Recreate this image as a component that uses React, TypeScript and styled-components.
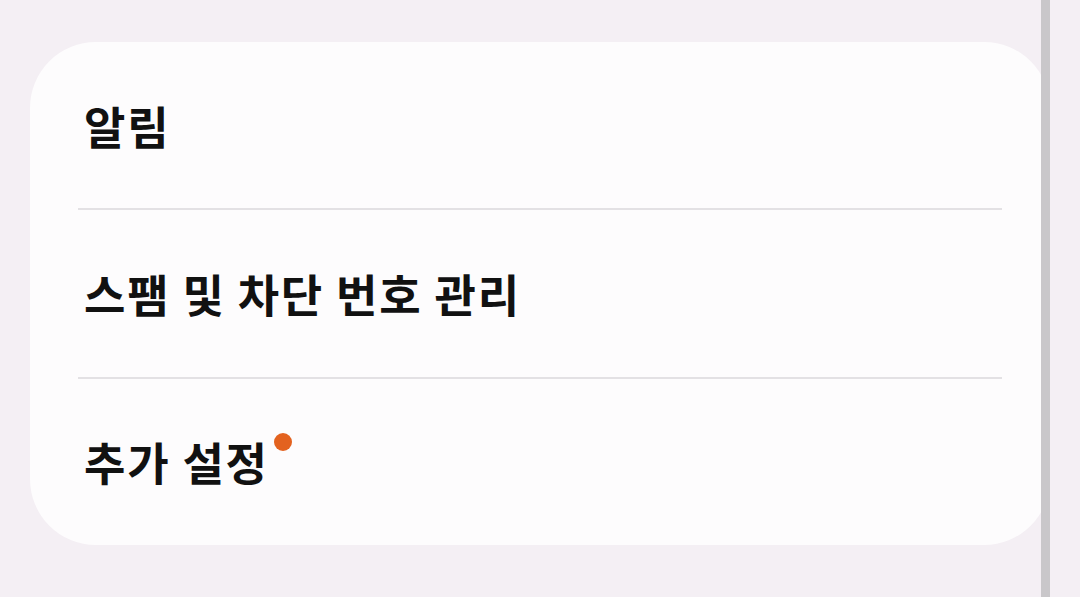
import React from "react";
import styled, { createGlobalStyle } from "styled-components";

const Global = createGlobalStyle`
  html, body { margin: 0; padding: 0; background: #f4eff4; }
  body { font-family: "Noto Sans CJK KR", "Noto Sans", sans-serif; }
`;

const Page = styled.div`
  position: relative;
  width: 1080px;
  height: 597px;
  padding: 42px 30px 0 30px;
  box-sizing: border-box;
  background: #f4eff4;
  overflow: hidden;
`;

const Card = styled.div`
  display: flex;
  flex-direction: column;
  background: #fdfcfd;
  border-radius: 66px;
  height: 503px;
  padding: 0 48px;
`;

const Row = styled.div<{ $divider?: boolean }>`
  display: flex;
  align-items: center;
  flex: 1;
  border-bottom: ${(p) => (p.$divider ? "2px solid #e3e1e4" : "none")};
`;

const Label = styled.span`
  position: relative;
  font-size: 45px;
  font-weight: 600;
  color: #111;
  letter-spacing: 1.8px;
  margin-left: 6px;
`;

const Dot = styled.span`
  position: absolute;
  right: -23px;
  top: 4px;
  width: 18px;
  height: 18px;
  border-radius: 50%;
  background: #e3621f;
`;

const Scrollbar = styled.div`
  position: absolute;
  top: 0;
  left: 1041px;
  width: 9px;
  height: 597px;
  background: #c9c7ca;
`;

export default function App() {
  return (
    <>
      <Global />
      <Page>
        <Card>
          <Row $divider>
            <Label>알림</Label>
          </Row>
          <Row $divider>
            <Label>스팸 및 차단 번호 관리</Label>
          </Row>
          <Row>
            <Label>
              추가 설정
              <Dot />
            </Label>
          </Row>
        </Card>
        <Scrollbar />
      </Page>
    </>
  );
}
